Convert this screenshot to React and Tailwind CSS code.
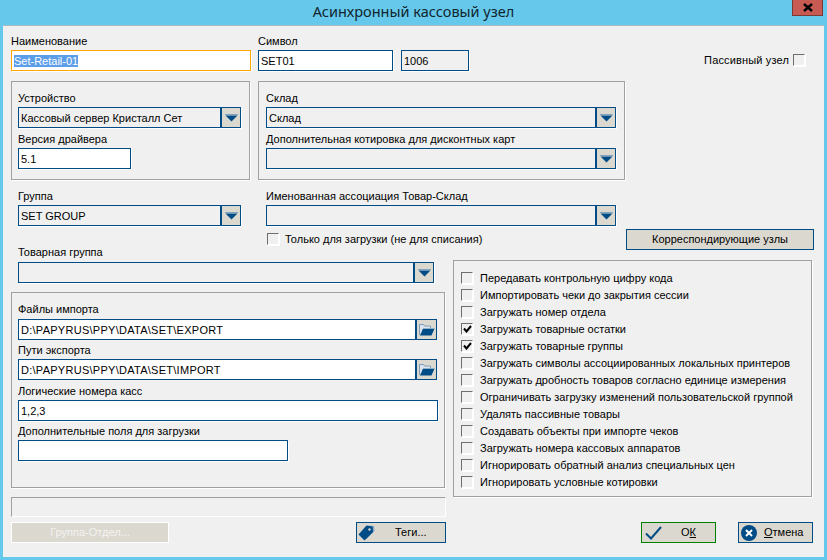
const FONT = "font-['Liberation_Sans',Arial,sans-serif]";

function Label({ children, className = "" }) {
  return <div className={`h-[14px] leading-[14px] text-[11px] text-black whitespace-nowrap ${className}`}>{children}</div>;
}

function Field({ children, className = "", bg = "bg-white", border = "border-[#004c86]" }) {
  return (
    <div className={`h-[21px] border ${border} ${bg} flex items-center pl-[2px] text-[11px] leading-[14px] text-black whitespace-nowrap shadow-[1px_1px_0_#ffffff] ${className}`}>
      {children}
    </div>
  );
}

function Arrow() {
  return (
    <svg width="13" height="8" viewBox="0 0 13 8">
      <path d="M0 0.5h13" stroke="#7fa3c0" strokeWidth="1" />
      <path d="M0.5 1.5h12L6.5 7.5z" fill="#004c86" />
    </svg>
  );
}

function Combo({ value, className = "" }) {
  return (
    <div className={`h-[21px] border border-[#004c86] bg-[#f0f0f0] flex text-[11px] leading-[14px] text-black shadow-[1px_1px_0_#ffffff] ${className}`}>
      <div className="flex-1 flex items-center pl-[2px] whitespace-nowrap">{value}</div>
      <div className="w-[20px] border-l-2 border-[#004c86] bg-[#dbd8d0] flex items-center justify-center">
        <Arrow />
      </div>
    </div>
  );
}

function Folder() {
  return (
    <svg width="16" height="13" viewBox="0 0 16 13">
      <path d="M0.5 12V1.5h4l1 1.5h6v2" fill="#dbe4ec" stroke="#7f9db8" strokeWidth="1" />
      <path d="M1 12.5L4 5.5h11.5l-3 7z" fill="#004c86" />
      <path d="M4 5.5h11.5" stroke="#8fb0cb" strokeWidth="1" />
    </svg>
  );
}

function PathField({ value, className = "" }) {
  return (
    <div className={`h-[21px] w-[419px] border border-[#004c86] bg-white flex text-[11px] leading-[14px] tracking-[0.27px] text-black ${className}`}>
      <div className="flex-1 flex items-center pl-[2px] whitespace-nowrap">{value}</div>
      <div className="w-[21px] border-l-2 border-[#004c86] bg-[#dbd8d0] flex items-center justify-center">
        <Folder />
      </div>
    </div>
  );
}

function Check({ checked = false }) {
  return (
    <div className="w-[12px] h-[12px] shrink-0 border border-[#6e6e6e] border-r-white border-b-white bg-[#f0f0f0] shadow-[1px_1px_0_#ffffff] flex items-center justify-center">
      {checked && (
        <svg width="9" height="8" viewBox="0 0 9 8">
          <path d="M1 3.5l2.5 3L8 1" fill="none" stroke="#000" strokeWidth="2" />
        </svg>
      )}
    </div>
  );
}

function Opt({ label, checked }) {
  return (
    <div className="h-[17px] flex items-center gap-[7px] pl-[7px] text-[11px] leading-[14px] text-black whitespace-nowrap">
      <Check checked={checked} />
      <span>{label}</span>
    </div>
  );
}

const opts = [
  ["Передавать контрольную цифру кода", false],
  ["Импортировать чеки до закрытия сессии", false],
  ["Загружать номер отдела", false],
  ["Загружать товарные остатки", true],
  ["Загружать товарные группы", true],
  ["Загружать символы ассоциированных локальных принтеров", false],
  ["Загружать дробность товаров согласно единице измерения", false],
  ["Ограничивать загрузку изменений пользовательской группой", false],
  ["Удалять пассивные товары", false],
  ["Создавать объекты при импорте чеков", false],
  ["Загружать номера кассовых аппаратов", false],
  ["Игнорировать обратный анализ специальных цен", false],
  ["Игнорировать условные котировки", false],
];

const groupBox = "border border-[#a0a0a0] shadow-[1px_1px_0_#ffffff]";

export default function App() {
  return (
    <div className={`w-[827px] h-[560px] bg-[#66c9ec] flex flex-col overflow-hidden ${FONT}`}>
      <div className="relative h-[25px] flex items-center justify-center pb-[4px]">
        <span className="font-['Noto_Sans',sans-serif] text-[14.5px] leading-[20px] text-[#10252e]">Асинхронный кассовый узел</span>
        <div className="absolute right-[4px] top-0 w-[31px] h-[16px] bg-[#c75b53] border border-t-0 border-[#7d3a35] flex items-center justify-center">
          <svg width="10" height="9" viewBox="0 0 10 9">
            <path d="M1 1l8 7M9 1l-8 7" stroke="#000" strokeWidth="2.4" fill="none" />
          </svg>
        </div>
      </div>

      <div className="mx-[3px] w-[821px] h-[532px] bg-[#f0f0f0] border-t border-[#a9bcc4] pl-[8px] pt-[8px]">
        {/* row 1 */}
        <div className="flex items-end">
          <div className="w-[240px]">
            <Label className="mb-[2px]">Наименование</Label>
            <Field border="border-[#fca800]">
              <span className="bg-[#5c9ee8] text-white leading-[12px]">Set-Retail-01</span>
            </Field>
          </div>
          <div className="w-[135px] ml-[7px]">
            <Label className="mb-[2px]">Символ</Label>
            <Field>SET01</Field>
          </div>
          <Field className="w-[68px] ml-[8px]" bg="bg-[#f0f0f0]">1006</Field>
          <div className="ml-auto mr-[19px] flex items-center gap-[4px] h-[21px] pb-[1px] text-[11px] tracking-[0.15px] text-black whitespace-nowrap">
            <span>Пассивный узел</span>
            <Check />
          </div>
        </div>

        {/* group boxes */}
        <div className="flex gap-[8px] mt-[10px]">
          <div className={`w-[239px] h-[99px] pl-[6px] pt-[9px] ${groupBox}`}>
            <Label className="mb-[2px]">Устройство</Label>
            <Combo value="Кассовый сервер Кристалл Сет" className="w-[223px]" />
            <Label className="mt-[4px] mb-[2px]">Версия драйвера</Label>
            <Field className="w-[113px]">5.1</Field>
          </div>
          <div className={`w-[367px] h-[99px] pl-[7px] pt-[9px] ${groupBox}`}>
            <Label className="mb-[2px]">Склад</Label>
            <Combo value="Склад" className="w-[350px]" />
            <Label className="mt-[4px] mb-[2px]">Дополнительная котировка для дисконтных карт</Label>
            <Combo value="" className="w-[350px]" />
          </div>
        </div>

        {/* group / association */}
        <div className="flex gap-[25px] mt-[9px] pl-[7px]">
          <div className="w-[223px]">
            <Label className="mb-[2px]">Группа</Label>
            <Combo value="SET GROUP" />
          </div>
          <div className="w-[350px]">
            <Label className="mb-[2px]">Именованная ассоциация Товар-Склад</Label>
            <Combo value="" />
          </div>
        </div>

        {/* two columns */}
        <div className="flex gap-[7px]">
          <div className="w-[435px]">
            <div className="mt-[7px] pl-[256px] flex items-center gap-[6px] h-[12px] text-[11px] text-black whitespace-nowrap">
              <Check />
              <span>Только для загрузки (не для списания)</span>
            </div>
            <div className="pl-[7px]">
              <Label className="mb-[3px]">Товарная группа</Label>
              <Combo value="" className="w-[416px]" />
            </div>
            <div className={`w-[434px] h-[196px] mt-[9px] pl-[6px] pt-[9px] ${groupBox}`}>
              <Label className="mb-[3px]">Файлы импорта</Label>
              <PathField value="D:\PAPYRUS\PPY\DATA\SET\EXPORT" />
              <Label className="mt-[3px] mb-[2px]">Пути экспорта</Label>
              <PathField value="D:\PAPYRUS\PPY\DATA\SET\IMPORT" />
              <Label className="mt-[4px] mb-[2px]">Логические номера касс</Label>
              <Field className="w-[420px]">1,2,3</Field>
              <Label className="mt-[3px] mb-[2px]">Дополнительные поля для загрузки</Label>
              <Field className="w-[270px]" />
            </div>
            <div className="w-[435px] h-[20px] mt-[9px] border border-[#a0a0a0] border-r-white border-b-white" />
            <div className="flex justify-between mt-[5px]">
              <div className="w-[158px] h-[21px] bg-[#dbd8d0] border border-white text-[#f4f3f0] text-[11px] flex items-center justify-center">
                Группа-Отдел...
              </div>
              <div className="w-[90px] h-[21px] bg-[#dbd8d0] border border-[#004c86] text-black text-[11px] flex items-center pl-[1px]">
                <svg width="17" height="16" viewBox="0 0 17 16">
                  <path d="M11 0.5l5 0.5 0.5 5-8 8-5-5z" fill="#7fa3c0" />
                  <path d="M8.5 0.5L14.5 1.5 15 7 6.5 15.5 0.5 9.5z" fill="#004c86" />
                  <circle cx="11.5" cy="4.5" r="1.2" fill="#dbd8d0" />
                </svg>
                <span className="ml-[20px]">Теги...</span>
              </div>
            </div>
          </div>

          <div className="w-[361px]">
            <div className="mt-[3px] ml-[173px] w-[188px] h-[21px] bg-[#dbd8d0] border border-[#004c86] text-[11px] text-black flex items-center justify-center">
              Корреспондирующие узлы
            </div>
            <div className={`w-[359px] h-[237px] mt-[10px] pt-[8px] ${groupBox}`}>
              {opts.map(([label, checked]) => (
                <Opt key={label} label={label} checked={checked} />
              ))}
            </div>
            <div className="flex justify-end gap-[22px] mt-[25px] pr-[1px]">
              <div className="w-[75px] h-[21px] bg-[#dbd8d0] border border-[#008000] text-[11px] text-black flex items-center pl-[3px]">
                <svg width="17" height="14" viewBox="0 0 17 14">
                  <path d="M1 7.5l5 5L16 1" fill="none" stroke="#004c86" strokeWidth="2" />
                </svg>
                <span className="ml-[19px]">О<span className="underline">К</span></span>
              </div>
              <div className="w-[75px] h-[21px] bg-[#dbd8d0] border border-[#004c86] text-[11px] text-black flex items-center pl-[2px]">
                <svg width="16" height="16" viewBox="0 0 16 16">
                  <circle cx="8" cy="8" r="8" fill="#004c86" />
                  <path d="M5 5l6 6M11 5l-6 6" stroke="#ffffff" strokeWidth="2" />
                </svg>
                <span className="ml-[7px]"><span className="underline">О</span>тмена</span>
              </div>
            </div>
          </div>
        </div>
      </div>
    </div>
  );
}
